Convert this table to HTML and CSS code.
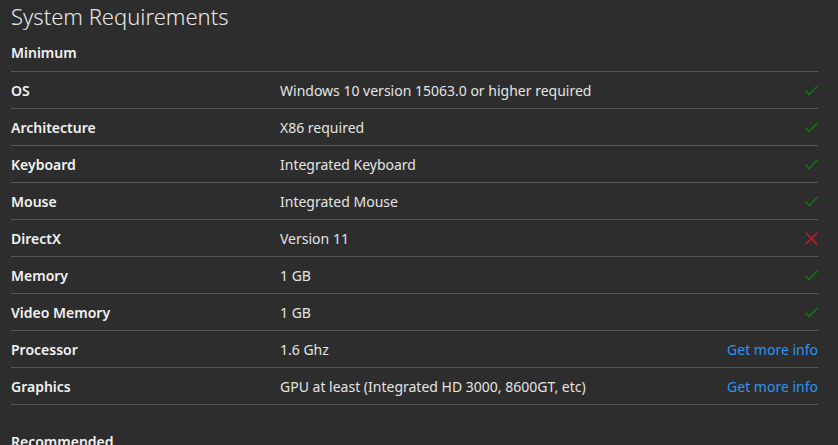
FILE: index.html
```html
<!DOCTYPE html>
<html>
<head>
<meta charset="utf-8">
<link rel="stylesheet" href="styles.css">
</head>
<body>
<div class="page">
  <h1 class="title">System Requirements</h1>
  <div class="section-head">Minimum</div>
  <div class="rows">
    <div class="row"><span class="label">OS</span><span class="value">Windows 10 version 15063.0 or higher required</span><span class="status"><svg class="ok" viewBox="0 0 13 11"><path d="M0.5 5.5 L4 9.5 L12.5 1"/></svg></span></div>
    <div class="row"><span class="label">Architecture</span><span class="value">X86 required</span><span class="status"><svg class="ok" viewBox="0 0 13 11"><path d="M0.5 5.5 L4 9.5 L12.5 1"/></svg></span></div>
    <div class="row"><span class="label">Keyboard</span><span class="value">Integrated Keyboard</span><span class="status"><svg class="ok" viewBox="0 0 13 11"><path d="M0.5 5.5 L4 9.5 L12.5 1"/></svg></span></div>
    <div class="row"><span class="label">Mouse</span><span class="value">Integrated Mouse</span><span class="status"><svg class="ok" viewBox="0 0 13 11"><path d="M0.5 5.5 L4 9.5 L12.5 1"/></svg></span></div>
    <div class="row"><span class="label">DirectX</span><span class="value">Version 11</span><span class="status"><svg class="bad" viewBox="0 0 13 13"><path d="M0.5 0.5 L12.5 12.5 M12.5 0.5 L0.5 12.5"/></svg></span></div>
    <div class="row"><span class="label">Memory</span><span class="value">1 GB</span><span class="status"><svg class="ok" viewBox="0 0 13 11"><path d="M0.5 5.5 L4 9.5 L12.5 1"/></svg></span></div>
    <div class="row"><span class="label">Video Memory</span><span class="value">1 GB</span><span class="status"><svg class="ok" viewBox="0 0 13 11"><path d="M0.5 5.5 L4 9.5 L12.5 1"/></svg></span></div>
    <div class="row"><span class="label">Processor</span><span class="value">1.6 Ghz</span><span class="status"><a class="more" href="#">Get more info</a></span></div>
    <div class="row"><span class="label">Graphics</span><span class="value">GPU at least (Integrated HD 3000, 8600GT, etc)</span><span class="status"><a class="more" href="#">Get more info</a></span></div>
  </div>
  <div class="section-head recommended">Recommended</div>
</div>
</body>
</html>
```
FILE: styles.css
```css
html, body {
  margin: 0;
  padding: 0;
  background: #2d2d2d;
  overflow: hidden;
}
.page {
  padding-left: 11px;
  width: 807px;
  font-family: "Noto Sans", "Open Sans", sans-serif;
  color: #e6e6e6;
  font-size: 14px;
}
.title {
  margin: 0;
  height: 36px;
  font-size: 22px;
  font-weight: 300;
  line-height: 32px;
  color: #e8e8e8;
  font-family: "Noto Sans", "Open Sans", sans-serif;
}
.section-head {
  line-height: 34px;
  font-weight: 600;
  color: #f2f2f2;
  border-bottom: 1px solid #575757;
  box-sizing: border-box;
  height: 36px;
}
.recommended {
  border-bottom: none;
  margin-top: 20px;
}
.row {
  display: flex;
  align-items: center;
  height: 37px;
  border-bottom: 1px solid #575757;
  box-sizing: border-box;
}
.label {
  width: 269px;
  font-weight: 600;
  color: #f2f2f2;
}
.value {
  flex: 1;
  color: #e4e4e4;
}
.status {
  display: flex;
  align-items: center;
}
.ok {
  width: 13px;
  height: 11px;
  fill: none;
  stroke: #107c10;
  stroke-width: 1.3;
}
.bad {
  width: 13px;
  height: 13px;
  fill: none;
  stroke: #e81123;
  stroke-width: 1.3;
}
.more {
  color: #2b95f0;
  text-decoration: none;
}
```
